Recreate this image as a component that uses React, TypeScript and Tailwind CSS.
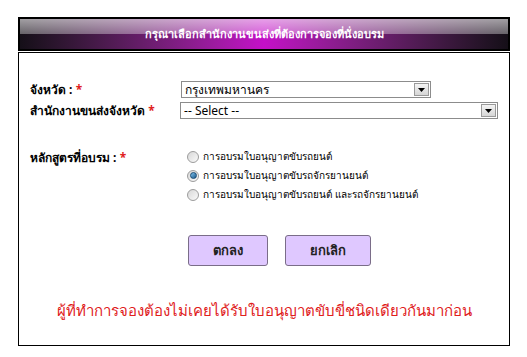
import React, { useState } from 'react';

const font = { fontFamily: 'Tahoma, "Noto Sans", "Liberation Sans", sans-serif' };

function FakeSelect({ value, width }: { value: string; width: string }) {
	return (
		<div
			className={`flex items-center h-[17px] border border-[#8c8c8c] bg-white ${width}`}
		>
			<span className="flex-1 pl-[3px] text-[12px] leading-[15px] text-black whitespace-nowrap overflow-hidden">
				{value}
			</span>
			<span className="flex items-center justify-center w-[15px] h-[13px] mr-[1px] border border-[#9a9a9a] bg-gradient-to-b from-[#f4f4f4] to-[#d6d6d6]">
				<svg width="7" height="4" viewBox="0 0 7 4">
					<path d="M0 0h7L3.5 4z" fill="#000" />
				</svg>
			</span>
		</div>
	);
}

function Radio({ checked }: { checked: boolean }) {
	return (
		<span className="relative inline-flex items-center justify-center w-[12px] h-[12px] rounded-full border border-[#9c9c9c] bg-gradient-to-br from-[#d8d8d8] to-[#fafafa]">
			{checked && (
				<span className="w-[7px] h-[7px] rounded-full bg-gradient-to-br from-[#7fc3ee] to-[#1b5a8c] border border-[#174a73]" />
			)}
		</span>
	);
}

export default function App() {
	const [course, setCourse] = useState(1);
	const courses = [
		'การอบรมใบอนุญาตขับรถยนต์',
		'การอบรมใบอนุญาตขับรถจักรยานยนต์',
		'การอบรมใบอนุญาตขับรถยนต์ และรถจักรยานยนต์',
	];

	return (
		<div className="w-[527px] h-[357px] bg-white pt-[17px] pl-[18px]" style={font}>
			<div className="w-[492px]">
				<div className="relative h-[34px] border-2 border-black bg-gradient-to-r from-[#150f18] via-[#c40fc8] to-[#150f18] flex items-center justify-center overflow-hidden">
					<div className="absolute left-0 right-0 top-0 h-[15px] bg-gradient-to-b from-white/60 to-white/35" />
					<span className="relative text-white text-[11px] font-bold pt-[1px]">
						กรุณาเลือกสำนักงานขนส่งที่ต้องการจองที่นั่งอบรม
					</span>
				</div>
				<div className="mt-[1px] h-[294px] border border-black px-[11px] pt-[28px]">
					<div className="flex items-center h-[17px]">
						<span className="w-[151px] text-[12px] font-bold text-black">
							จังหวัด : <span className="text-[#e02020]">*</span>
						</span>
						<FakeSelect value="กรุงเทพมหานคร" width="w-[250px]" />
					</div>
					<div className="flex items-center h-[17px] mt-[4px]">
						<span className="w-[151px] text-[12px] font-bold text-black">
							สำนักงานขนส่งจังหวัด <span className="text-[#e02020]">*</span>
						</span>
						<FakeSelect value="-- Select --" width="w-[320px]" />
					</div>

					<div className="flex mt-[30px]">
						<span className="w-[151px] text-[12px] font-bold text-black">
							หลักสูตรที่อบรม : <span className="text-[#e02020]">*</span>
						</span>
						<div className="flex flex-col gap-[6px] pl-[6px] pt-[1px]">
							{courses.map((c, i) => (
								<label
									key={i}
									className="flex items-center gap-[4px] h-[13px] text-[10px] text-black cursor-pointer"
									onClick={() => setCourse(i)}
								>
									<Radio checked={course === i} />
									{c}
								</label>
							))}
						</div>
					</div>

					<div className="flex gap-[17px] mt-[34px] pl-[158px]">
						<button className="w-[80px] h-[31px] rounded-[3px] border border-[#7a6d88] bg-[#dfc8ff] text-[13px] font-bold text-[#222]">
							ตกลง
						</button>
						<button className="w-[86px] h-[31px] rounded-[3px] border border-[#7a6d88] bg-[#dfc8ff] text-[13px] font-bold text-[#222]">
							ยกเลิก
						</button>
					</div>

					<p className="mt-[33px] text-center text-[15px] text-[#e0201c]">
						ผู้ที่ทำการจองต้องไม่เคยได้รับใบอนุญาตขับขี่ชนิดเดียวกันมาก่อน
					</p>
				</div>
			</div>
		</div>
	);
}
